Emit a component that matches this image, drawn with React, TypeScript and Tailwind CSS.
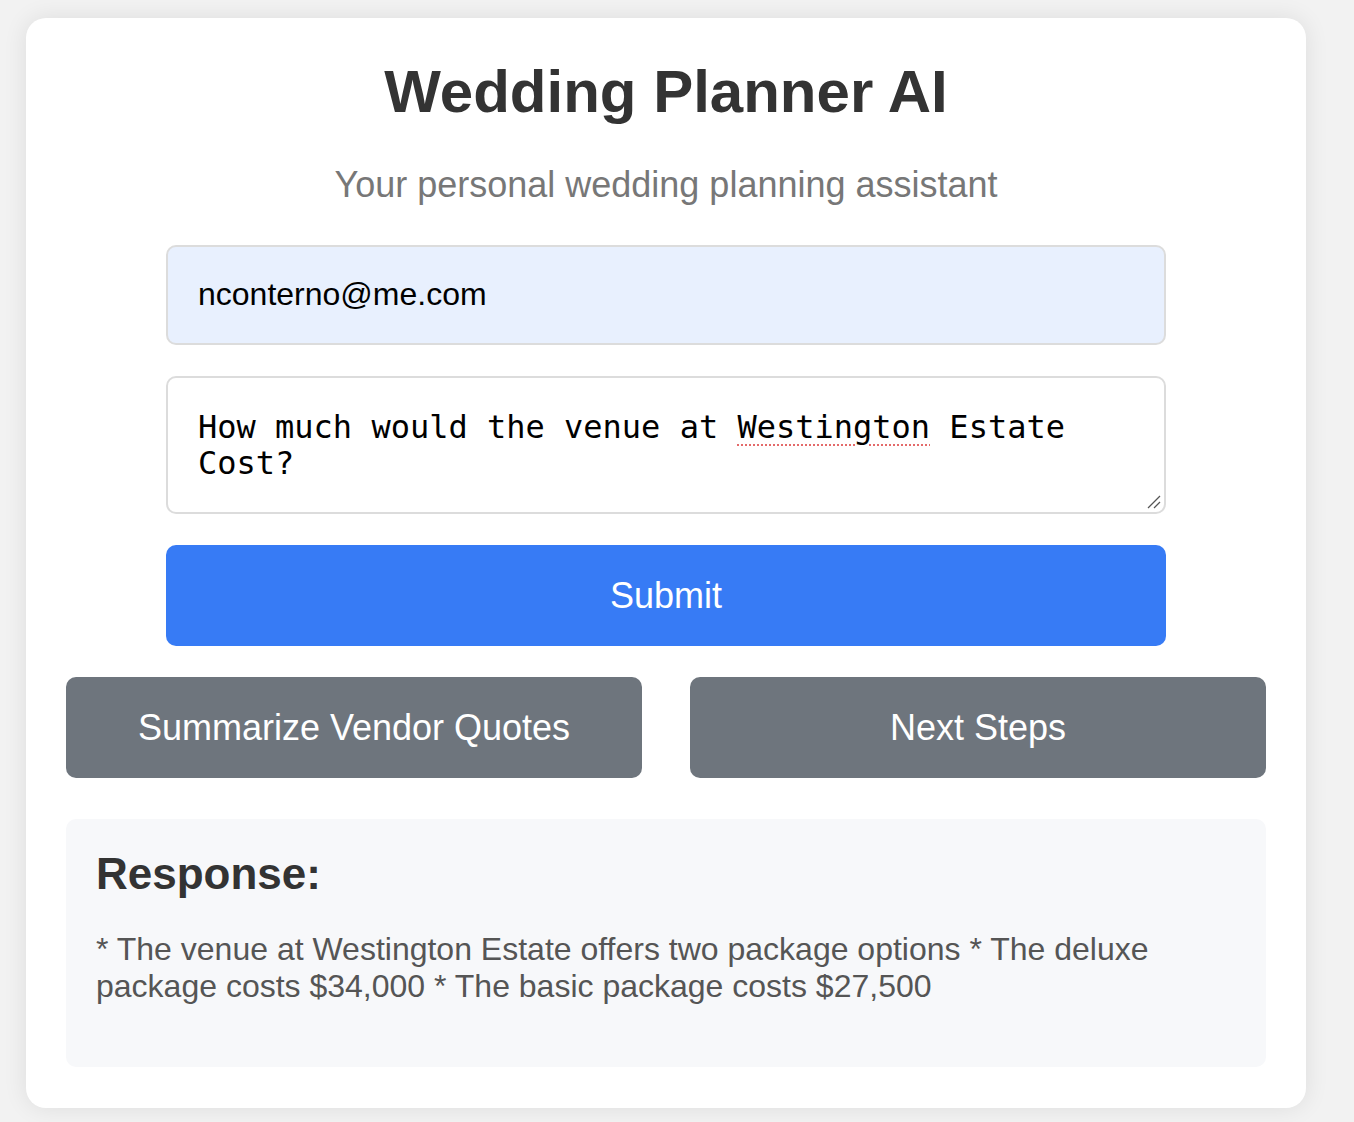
import React from "react";

export default function App() {
  return (
    <div className="min-h-[1122px] w-full bg-[#f2f2f2] pt-[18px] pl-[26px]" style={{ fontFamily: '"Liberation Sans", Arial, sans-serif' }}>
      <div className="w-[1280px] rounded-[20px] bg-white px-[40px] pt-[39px] pb-[41px] shadow-[0_0_24px_rgba(0,0,0,0.09)]">
        <h1 className="text-center text-[60px] font-bold leading-[69px] text-[#333]">Wedding Planner AI</h1>
        <p className="mt-[38px] text-center text-[36px] leading-[41px] text-[#777]">Your personal wedding planning assistant</p>

        <div className="mx-auto mt-[40px] flex w-[1000px] flex-col gap-[31px]">
          <div className="h-[100px] rounded-[10px] border-2 border-[#dcdcdc] bg-[#e8f0fe] px-[30px] py-[29px] text-[32px] leading-[37px] text-black">
            nconterno@me.com
          </div>
          <div className="relative h-[138px] rounded-[10px] border-2 border-[#dcdcdc] bg-white px-[30px] pt-[31px] pb-[27px] text-[32px] leading-[36px] text-black" style={{ fontFamily: '"DejaVu Sans Mono", "Liberation Mono", monospace' }}>
            How much would the venue at{" "}
            <span className="underline decoration-dotted decoration-[#e46a6a] decoration-2 underline-offset-[6px]">Westington</span>{" "}
            Estate Cost?
            <svg className="absolute bottom-[2px] right-[2px]" width="16" height="16" viewBox="0 0 16 16">
              <line x1="2" y1="14" x2="14" y2="2" stroke="#555" strokeWidth="1.3" />
              <line x1="8" y1="14" x2="14" y2="8" stroke="#555" strokeWidth="1.3" />
            </svg>
          </div>
          <button className="h-[101px] w-full rounded-[10px] bg-[#377bf5] text-[36px] text-white">Submit</button>
        </div>

        <div className="mt-[31px] grid grid-cols-2 gap-[48px]">
          <button className="h-[101px] rounded-[10px] bg-[#6e757d] text-[36px] text-white">Summarize Vendor Quotes</button>
          <button className="h-[101px] rounded-[10px] bg-[#6e757d] text-[36px] text-white">Next Steps</button>
        </div>

        <div className="mt-[41px] rounded-[10px] bg-[#f7f8fa] px-[30px] pt-[29px] pb-[62px]">
          <h3 className="text-[44px] font-bold leading-[51px] text-[#333]">Response:</h3>
          <p className="mt-[32px] text-[32px] leading-[37px] text-[#555]">
            * The venue at Westington Estate offers two package options * The deluxe package costs $34,000 * The basic package costs $27,500
          </p>
        </div>
      </div>
    </div>
  );
}
